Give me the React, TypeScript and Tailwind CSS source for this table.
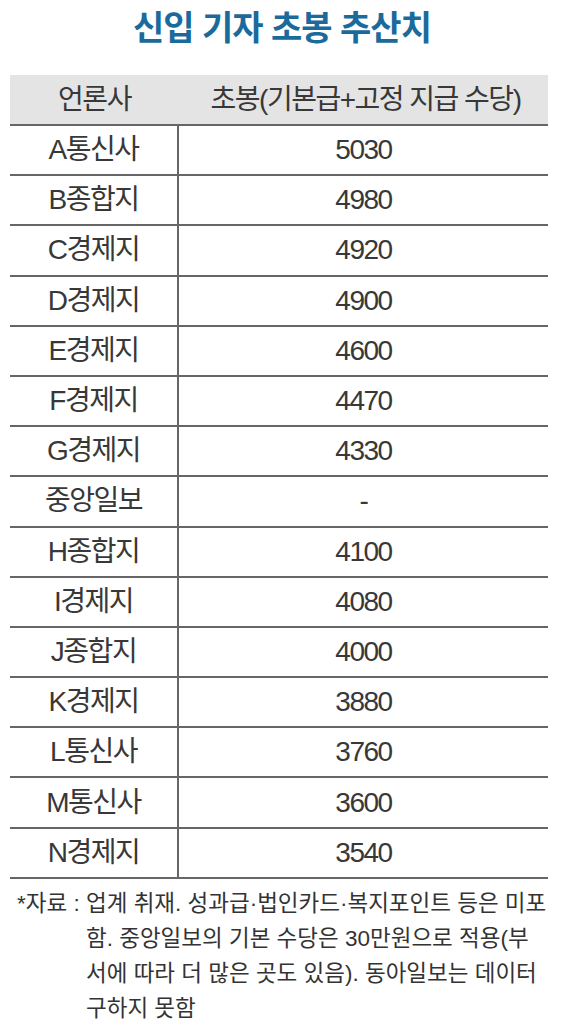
const rows: [string, string][] = [
  ['A통신사', '5030'],
  ['B종합지', '4980'],
  ['C경제지', '4920'],
  ['D경제지', '4900'],
  ['E경제지', '4600'],
  ['F경제지', '4470'],
  ['G경제지', '4330'],
  ['중앙일보', '-'],
  ['H종합지', '4100'],
  ['I경제지', '4080'],
  ['J종합지', '4000'],
  ['K경제지', '3880'],
  ['L통신사', '3760'],
  ['M통신사', '3600'],
  ['N경제지', '3540'],
];

const font = "font-['Liberation_Sans','Noto_Sans_CJK_KR',sans-serif]";

export default function App() {
  return (
    <div className={`w-[580px] h-[1034px] bg-white overflow-hidden ${font}`}>
      <h1 className="pt-[4px] pr-[16px] h-[75px] text-center text-[34px] font-bold text-[#1b6a9c] tracking-[-1px] leading-[48px]">
        신입 기자 초봉 추산치
      </h1>

      <div className="ml-[10px] w-[538px] text-[#383838] text-[28px] tracking-[-1.5px]">
        <div className="h-[51px] bg-[#e4e4e4] border-b-2 border-[#666] flex items-center">
          <div className="w-[169px] text-center">언론사</div>
          <div className="flex-1 text-center pl-[4px]">초봉(기본급+고정 지급 수당)</div>
        </div>
        {rows.map(([name, pay]) => (
          <div key={name} className="h-[50.2px] border-b-2 border-[#666] flex items-center">
            <div className="w-[169px] h-full border-r-2 border-[#666] flex items-center justify-center">
              {name}
            </div>
            <div className="flex-1 text-center">{pay}</div>
          </div>
        ))}
      </div>

      <div className="mt-[7px] ml-[17px] flex text-[22.5px] leading-[35px] text-[#333]">
        <div className="w-[69px] whitespace-nowrap">*자료 :</div>
        <div className="whitespace-nowrap">
          업계 취재. 성과급·법인카드·복지포인트 등은 미포
          <br />
          함. 중앙일보의 기본 수당은 30만원으로 적용(부
          <br />
          서에 따라 더 많은 곳도 있음). 동아일보는 데이터
          <br />
          구하지 못함
        </div>
      </div>
    </div>
  );
}
